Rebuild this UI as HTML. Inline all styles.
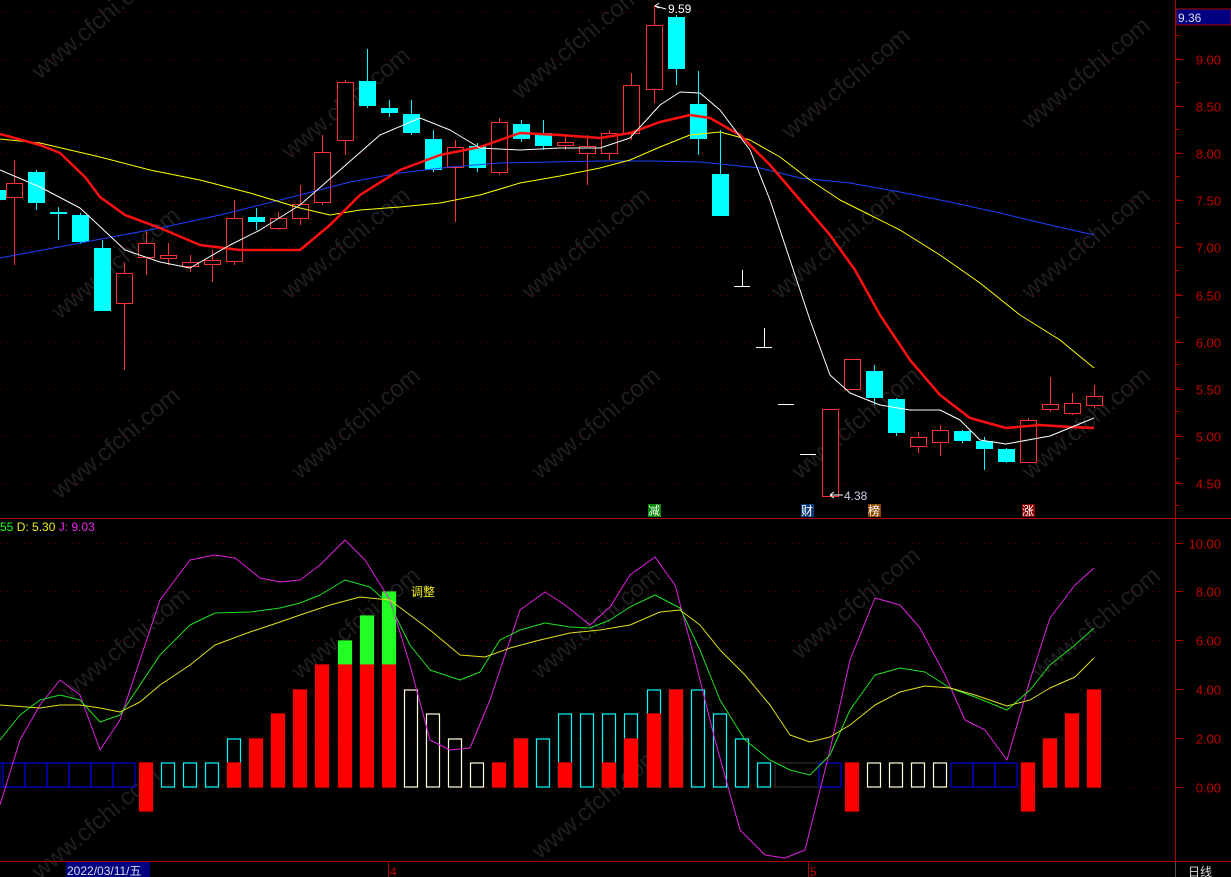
<!DOCTYPE html>
<html><head><meta charset="utf-8"><style>
html,body{margin:0;padding:0;background:#000;width:1231px;height:877px;overflow:hidden}
svg{display:block}
text{font-family:"Liberation Sans","Noto Sans CJK SC",sans-serif}
</style></head><body>
<svg id="s" width="1231" height="877" xmlns="http://www.w3.org/2000/svg"></svg>
<script>
var s=document.getElementById('s'),h='';
function L(p,c,w){h+='<polyline points="'+p.map(function(a){return a.join(',')}).join(' ')+'" fill="none" stroke="'+c+'" stroke-width="'+(w||1)+'" stroke-linejoin="round"/>';}
var wm=[[40,80],[290,160],[520,100],[790,140],[1030,130],[60,320],[290,300],[530,300],[780,300],[1030,300],[60,500],[300,480],[540,480],[800,480],[1030,480],[70,700],[300,680],[540,680],[800,660],[1040,680],[40,880],[540,860]];
wm.forEach(function(p){h+='<text x="'+p[0]+'" y="'+p[1]+'" fill="#1f1f1f" font-size="24" transform="rotate(-40 '+p[0]+' '+p[1]+')">www.cfchi.com</text>';});
var py=function(p){return 59+(9-p)*94.2};
for(var p=4.5;p<=9.51;p+=0.5){var y=Math.round(py(p))+.5;h+='<line x1="0" x2="1175" y1="'+y+'" y2="'+y+'" stroke="#600" stroke-dasharray="1,5"/>';h+='<text x="1221" y="'+(y+5)+'" fill="#c00000" font-size="13" text-anchor="end">'+p.toFixed(2)+'</text>';h+='<line x1="1176" x2="1183" y1="'+y+'" y2="'+y+'" stroke="#a00"/>';}
var ly=function(v){return 787-v*24.45};
for(var v=0;v<=10;v+=2){var y=Math.round(ly(v))+.5;h+='<line x1="0" x2="1175" y1="'+y+'" y2="'+y+'" stroke="#600" stroke-dasharray="1,5"/>';h+='<text x="1221" y="'+(y+5)+'" fill="#c00000" font-size="13" text-anchor="end">'+v.toFixed(2)+'</text>';h+='<line x1="1176" x2="1183" y1="'+y+'" y2="'+y+'" stroke="#a00"/>';}
function R(x,y1,y2,c,f){h+='<rect x="'+(x-6.5)+'" y="'+y1+'" width="13" height="'+(y2-y1)+'" fill="'+(f?c:'none')+'" stroke="'+c+'" stroke-width="1.2"/>';}
for(var i=0;i<6;i++)h+='<rect x="'+(3+i*22)+'" y="763" width="22" height="24" fill="none" stroke="#0000dd" stroke-width="1.2"/>';
h+='<rect x="0" y="763" width="3" height="24" fill="none" stroke="#0000dd"/>';
R(146,763,811,'#f00',1);[168,190,212].forEach(function(x){R(x,763,787,'#0ff')});
R(234,739,787,'#0ff');R(234,763,787,'#f00',1);R(256,739,787,'#f00',1);R(278,714,787,'#f00',1);R(300,690,787,'#f00',1);R(322,665,787,'#f00',1);
R(345,641,665,'#2f2',1);R(345,665,787,'#f00',1);R(367,616,665,'#2f2',1);R(367,665,787,'#f00',1);R(389,592,665,'#2f2',1);R(389,665,787,'#f00',1);
R(411,690,787,'#ffd');R(433,714,787,'#ffd');R(455,739,787,'#ffd');R(477,763,787,'#ffd');R(499,763,787,'#f00',1);
R(521,739,787,'#0ff');R(521,739,787,'#f00',1);R(543,739,787,'#0ff');R(565,714,787,'#0ff');R(565,763,787,'#f00',1);R(587,714,787,'#0ff');R(609,714,787,'#0ff');R(609,763,787,'#f00',1);
R(631,714,787,'#0ff');R(631,739,787,'#f00',1);R(654,690,787,'#0ff');R(654,714,787,'#f00',1);R(676,690,787,'#0ff');R(676,690,787,'#f00',1);R(698,690,787,'#0ff');R(720,714,787,'#0ff');R(742,739,787,'#0ff');R(764,763,787,'#0ff');
h+='<rect x="775" y="763" width="44" height="24" fill="none" stroke="#333"/>';h+='<rect x="819" y="763" width="22" height="24" fill="none" stroke="#0000dd" stroke-width="1.2"/>';
R(852,763,811,'#f00',1);[874,896,918,940].forEach(function(x){R(x,763,787,'#ffd')});
for(i=0;i<3;i++)h+='<rect x="'+(951+i*22)+'" y="763" width="22" height="24" fill="none" stroke="#0000dd" stroke-width="1.2"/>';
R(1028,763,811,'#f00',1);R(1050,739,787,'#0ff');R(1050,739,787,'#f00',1);R(1072,714,787,'#f00',1);R(1094,690,787,'#f00',1);
L([[0,805],[20,740],[40,705],[60,680],[80,695],[100,750],[120,720],[140,660],[160,600],[190,560],[215,555],[235,558],[260,578],[280,582],[300,580],[320,565],[345,540],[365,560],[390,600],[410,665],[430,740],[450,750],[470,748],[490,700],[510,640],[520,610],[545,592],[565,605],[590,625],[610,607],[630,575],[655,557],[675,585],[695,660],[715,740],[740,830],[765,855],[785,858],[805,850],[830,750],[850,660],[875,598],[900,605],[920,628],[945,675],[965,720],[985,730],[1007,760],[1030,680],[1050,618],[1075,585],[1094,568]],'#e020e0');
L([[0,740],[20,715],[40,700],[60,695],[80,700],[100,722],[120,715],[140,685],[160,655],[190,625],[215,613],[250,612],[280,608],[300,603],[320,595],[345,580],[370,587],[390,605],[410,645],[430,670],[460,680],[480,672],[500,640],[520,630],[545,623],[570,627],[590,628],[610,620],[630,607],[655,595],[680,608],[700,650],[720,700],[745,740],[770,760],[790,770],[810,775],[830,755],[850,710],[875,675],[900,668],[925,672],[950,688],[975,697],[1007,710],[1030,690],[1050,665],[1075,645],[1094,628]],'#20e020');
L([[0,705],[40,708],[60,705],[80,705],[100,708],[120,712],[140,702],[160,685],[190,665],[215,645],[250,632],[280,622],[300,615],[330,605],[360,597],[390,600],[410,615],[430,630],[460,655],[485,657],[510,648],[540,640],[570,633],[600,630],[630,625],[660,612],[680,610],[700,625],[720,650],[745,675],[770,705],[790,735],[810,742],[830,737],[850,725],[875,705],[900,692],[925,686],[950,688],[975,695],[1007,706],[1030,700],[1050,688],[1075,677],[1094,658]],'#e0e020');
var C=[[-3,190,200,190,200,'d'],[14,183,197,160,265,'u'],[36,172,203,170,210,'d'],[58,212,214,207,240,'d'],[80,215,242,213,244,'d'],[102,248,311,240,311,'d'],[124,273,303,263,370,'u'],[146,243,257,230,275,'u'],[168,255,258,243,265,'u'],[190,262,266,255,272,'u'],[212,260,264,250,282,'u'],[234,218,261,200,265,'u'],[256,217,222,208,230,'d'],[278,218,228,212,230,'u'],[300,204,218,185,225,'u'],[322,152,202,135,205,'u'],[345,82,140,80,155,'u'],[367,81,106,49,108,'d'],[389,108,113,100,117,'d'],[411,114,133,100,135,'d'],[433,139,170,130,172,'d'],[455,147,167,140,222,'u'],[477,146,168,143,172,'d'],[499,122,172,118,175,'u'],[521,124,139,120,142,'d'],[543,133,146,120,150,'d'],[565,142,145,135,150,'u'],[587,146,153,135,185,'u'],[609,133,153,130,160,'u'],[631,85,133,73,140,'u'],[654,25,89,5,103,'u'],[676,17,69,15,85,'d'],[698,104,139,71,155,'d'],[720,174,216,130,216,'d'],
[830,409,496,409,496,'u'],[852,359,389,359,390,'u'],[874,371,398,365,405,'d'],[896,399,433,398,436,'d'],[918,437,446,432,453,'u'],[940,430,442,425,456,'u'],[962,431,441,430,443,'d'],[984,441,449,437,470,'d'],[1006,449,462,448,463,'d'],[1028,420,462,418,462,'u'],[1050,404,409,377,412,'u'],[1072,403,413,393,415,'u'],[1094,396,405,385,408,'u']];
C.forEach(function(c){var col=c[5]=='d'?'#00ffff':'#ff3030';h+='<line x1="'+(c[0]+.5)+'" x2="'+(c[0]+.5)+'" y1="'+c[3]+'" y2="'+c[4]+'" stroke="'+col+'"/>';if(c[5]=='d')h+='<rect x="'+(c[0]-8)+'" y="'+c[1]+'" width="17" height="'+Math.max(2,c[2]-c[1])+'" fill="#00ffff"/>';else h+='<rect x="'+(c[0]-7.5)+'" y="'+(c[1]+.5)+'" width="16" height="'+Math.max(1,c[2]-c[1])+'" fill="#000" stroke="#ff3030"/>';});
[[742,286,270],[764,347,328],[786,404,404],[808,454,454]].forEach(function(c){h+='<line x1="'+(c[0]-8)+'" x2="'+(c[0]+8)+'" y1="'+(c[1]+.5)+'" y2="'+(c[1]+.5)+'" stroke="#fff"/>';if(c[2]<c[1])h+='<line x1="'+(c[0]+.5)+'" x2="'+(c[0]+.5)+'" y1="'+c[2]+'" y2="'+c[1]+'" stroke="#fff"/>';});
L([[0,258],[80,243],[160,228],[220,215],[300,195],[350,182],[400,173],[450,167],[500,163],[550,162],[600,161],[650,161],[700,162],[760,168],[800,178],[850,183],[900,192],[950,202],[1000,213],[1050,225],[1094,235]],'#2040ff');
L([[0,139],[40,143],[100,157],[150,170],[200,180],[250,193],[300,208],[330,215],[360,210],[400,207],[440,203],[480,195],[520,183],[560,176],[600,168],[630,160],[660,147],[690,135],[720,132],[750,140],[780,157],[810,180],[840,200],[870,215],[900,230],[940,255],[980,283],[1020,315],[1060,340],[1094,368]],'#ffff00');
L([[0,134],[40,145],[60,153],[85,177],[100,197],[125,215],[160,228],[200,245],[240,250],[300,250],[330,225],[360,195],[400,170],[440,155],[480,147],[520,133],[560,135],[600,138],[630,133],[660,122],[690,115],[710,118],[740,135],[770,165],[800,200],[830,235],[855,270],[880,315],[910,360],[940,395],[970,418],[1006,428],[1040,425],[1070,427],[1094,428]],'#ff1010',2.5);
L([[0,170],[40,187],[80,208],[93,220],[125,250],[160,262],[190,268],[230,245],[260,230],[300,205],[340,170],[380,135],[420,118],[450,130],[480,148],[520,150],[560,148],[600,148],[630,138],[660,105],[680,92],[700,93],[720,110],[750,150],[770,200],[790,260],[810,320],[830,375],[850,393],[880,405],[910,410],[940,410],[960,420],[980,440],[1006,444],[1050,436],[1094,418]],'#ffffff');
h+='<path d="M655 6 L659 3 M655 6 L659 8 M655 6 L666 9" stroke="#fff" fill="none"/><text x="668" y="13" fill="#fff" font-size="12">9.59</text>';
h+='<path d="M830 495 L843 495 M830 495 L834 492 M830 495 L834 498" stroke="#fff" fill="none"/><text x="844" y="500" fill="#cce" font-size="12">4.38</text>';
h+='<text x="0" y="531" font-size="12"><tspan fill="#2f2">55 </tspan><tspan fill="#ee2">D: 5.30 </tspan><tspan fill="#e2e">J: 9.03</tspan></text>';
h+='<text x="411" y="596" fill="#ee2" font-size="12">调整</text>';
[[648,'#080','减'],[801,'#0a3a7a','财'],[868,'#8a4a00','榜'],[1022,'#800','涨']].forEach(function(t){h+='<rect x="'+t[0]+'" y="504" width="13" height="13" fill="'+t[1]+'"/><text x="'+t[0]+'" y="515" fill="#fff" font-size="12">'+t[2]+'</text>';});
h+='<line x1="0" x2="1231" y1="518.5" y2="518.5" stroke="#a00"/>';
h+='<line x1="1175.5" x2="1175.5" y1="0" y2="877" stroke="#a00"/>';
h+='<line x1="0" x2="1231" y1="861.5" y2="861.5" stroke="#a00"/>';
for(var y=12;y<518;y+=23.5)h+='<line x1="1176" x2="1180" y1="'+y+'" y2="'+y+'" stroke="#a00"/>';
h+='<rect x="1176" y="9" width="55" height="16" fill="#000080" stroke="#a00"/><text x="1178" y="22" fill="#dde" font-size="12">9.36</text>';
h+='<rect x="66" y="862" width="84" height="15" fill="#000080"/><text x="67" y="875" fill="#dde" font-size="12">2022/03/11/五</text>';
h+='<line x1="388.5" x2="388.5" y1="862" y2="877" stroke="#a00"/><text x="390" y="876" fill="#c00" font-size="12">4</text>';
h+='<line x1="808.5" x2="808.5" y1="862" y2="877" stroke="#a00"/><text x="810" y="876" fill="#c00" font-size="12">5</text>';
h+='<line x1="1175.5" x2="1175.5" y1="862" y2="877" stroke="#555"/><text x="1188" y="876" fill="#ddd" font-size="12">日线</text>';
s.innerHTML=h;
</script>
</body></html>
